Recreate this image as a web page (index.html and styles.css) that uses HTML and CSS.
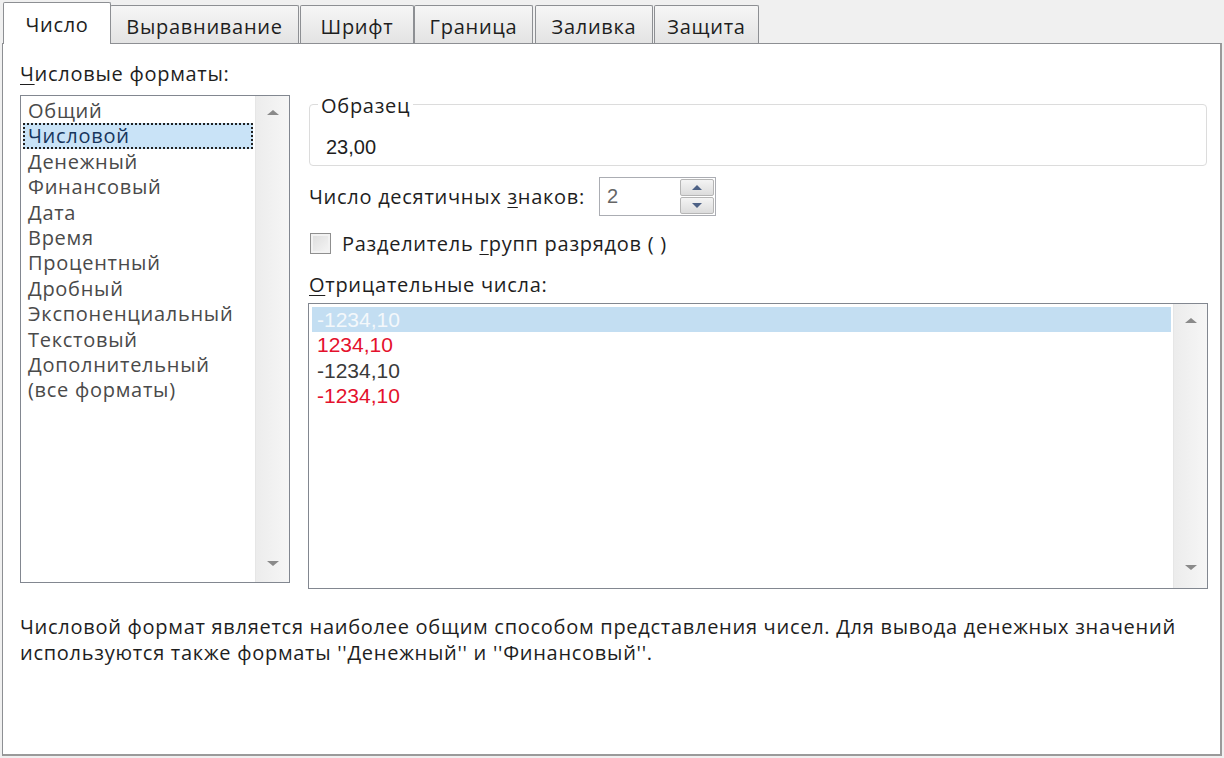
FILE: index.html
```html
<!DOCTYPE html>
<html lang="ru">
<head>
<meta charset="utf-8">
<link rel="stylesheet" href="styles.css">
</head>
<body>
<div class="dialog">
  <div class="tabs">
    <div class="tab active">Число</div>
    <div class="tab t2">Выравнивание</div>
    <div class="tab t3">Шрифт</div>
    <div class="tab t4">Граница</div>
    <div class="tab t5">Заливка</div>
    <div class="tab t6">Защита</div>
  </div>
  <div class="panel">
    <div class="main">
      <div class="leftcol">
        <div class="label"><u>Ч</u>исловые форматы:</div>
        <div class="listbox formats">
          <div class="items">
            <div class="item">Общий</div>
            <div class="item sel">Числовой</div>
            <div class="item">Денежный</div>
            <div class="item">Финансовый</div>
            <div class="item">Дата</div>
            <div class="item">Время</div>
            <div class="item">Процентный</div>
            <div class="item">Дробный</div>
            <div class="item">Экспоненциальный</div>
            <div class="item">Текстовый</div>
            <div class="item">Дополнительный</div>
            <div class="item">(все форматы)</div>
          </div>
          <div class="vscroll">
            <span class="arr up"></span>
            <span class="arr down"></span>
          </div>
        </div>
      </div>
      <div class="rightcol">
        <div class="group">
          <div class="legend">Образец</div>
          <div class="sample">23,00</div>
        </div>
        <div class="row decimals">
          <span class="rlabel declabel">Число десятичных <u>з</u>наков:</span>
          <div class="spin">
            <span class="spinval">2</span>
            <div class="spinbtns">
              <div class="sb"><span class="sarr up"></span></div>
              <div class="sb"><span class="sarr down"></span></div>
            </div>
          </div>
        </div>
        <div class="row check">
          <span class="cbox"></span>
          <span class="rlabel">Разделитель <u>г</u>рупп разрядов ( )</span>
        </div>
        <div class="label neg"><u>О</u>трицательные числа:</div>
        <div class="listbox negs">
          <div class="items">
            <div class="num selnum">-1234,10</div>
            <div class="num red">1234,10</div>
            <div class="num">-1234,10</div>
            <div class="num red">-1234,10</div>
          </div>
          <div class="vscroll">
            <span class="arr up"></span>
            <span class="arr down"></span>
          </div>
        </div>
      </div>
    </div>
    <p class="desc">Числовой формат является наиболее общим способом представления чисел. Для вывода денежных значений используются также форматы ''Денежный'' и ''Финансовый''.</p>
  </div>
</div>
</body>
</html>
```

FILE: styles.css
```css
* { box-sizing: border-box; }
html, body { margin: 0; padding: 0; }
body {
  background: #f0f0f0;
  font-family: "Open Sans", "DejaVu Sans", sans-serif;
  font-size: 20px;
  letter-spacing: 0.72px;
  color: #1e1e1e;
  width: 1224px;
  height: 758px;
  overflow: hidden;
}
u { text-decoration: underline; text-underline-offset: 3px; text-decoration-thickness: 1px; }

.dialog { width: 1224px; height: 758px; display: flex; flex-direction: column; }

.tabs {
  height: 44px;
  display: flex;
  align-items: flex-end;
  padding-left: 3px;
  position: relative;
  z-index: 2;
}
.tab {
  height: 38px;
  border: 1px solid #8d8f93;
  border-bottom: none;
  background: linear-gradient(#f6f6f6, #e3e3e3);
  display: flex;
  align-items: center;
  justify-content: center;
  color: #1e1e1e;
  margin-bottom: 1px;
  padding-top: 4px;
  border-top-left-radius: 2px;
  border-top-right-radius: 2px;
}
.tab.active {
  width: 108px;
  height: 42px;
  background: #fff;
  margin-bottom: 0;
  padding-top: 2px;
  padding-bottom: 0;
  border-color: #8d8f93;
}
.t2 { width: 189px; margin-left: -1px; }
.t3 { width: 114px; margin-left: 1px; }
.t4 { width: 119px; margin-left: 0; }
.t5 { width: 118px; margin-left: 2px; }
.t6 { width: 105px; margin-left: 1px; }

.panel {
  margin-left: 2px;
  width: 1220px;
  height: 713px;
  margin-top: -1px;
  background: #fff;
  border: 1px solid #8d8f93;
  border-right-width: 2px;
  border-bottom-width: 2px;
  border-right-color: #9a9a9a;
  border-bottom-color: #9a9a9a;
  padding: 18px 0 0 17px;
}

.main { display: flex; gap: 18px; }
.leftcol { width: 270px; display: flex; flex-direction: column; }
.label { height: 24px; line-height: 24px; white-space: nowrap; }
.leftcol .label { margin-bottom: 9px; }

.listbox {
  border: 1px solid #828790;
  background: #fff;
  display: flex;
}
.formats { height: 488px; }
.items { flex: 1; padding: 2px 2px 0 2px; }
.formats .item {
  height: 25.4px;
  line-height: 25.4px;
  padding-left: 5px;
  color: #4a4a4a;
  white-space: nowrap;
}
.formats .item.sel {
  background: #c9e3f7;
  outline: 2px dotted #202020;
  outline-offset: -2px;
  color: #17365d;
}
.vscroll {
  width: 34px;
  background: linear-gradient(90deg, #ececec, #f6f6f6);
  border-left: 1px solid #e6e6e6;
  display: flex;
  flex-direction: column;
  justify-content: space-between;
  align-items: center;
  padding: 14px 0 16px;
}
.arr { width: 0; height: 0; border-left: 6px solid transparent; border-right: 6px solid transparent; }
.arr.up { border-bottom: 5px solid #8a8a8a; }
.arr.down { border-top: 5px solid #8a8a8a; }

.rightcol { width: 900px; display: flex; flex-direction: column; }
.group {
  margin-top: 42px;
  margin-left: 1px;
  width: 898px;
  height: 62px;
  border: 1px solid #dcdcdc;
  border-radius: 4px;
  position: relative;
  padding: 28px 0 0 16px;
}
.legend {
  position: absolute;
  left: 8px;
  top: -13px;
  background: #fff;
  padding: 0 3px;
  line-height: 28px;
}
.sample { font-family: "Liberation Sans", Arial, sans-serif; font-size: 20px; line-height: 28px; letter-spacing: 0; }

.row { display: flex; align-items: center; }
.rlabel { white-space: nowrap; }
.declabel { width: 290px; }
.decimals { margin-top: 11px; height: 39px; padding-left: 1px; }
.spin {
  width: 117px;
  height: 39px;
  border: 1px solid #abadb3;
  display: flex;
  align-items: center;
  justify-content: space-between;
  padding: 0 1px 0 7px;
}
.spinval { font-family: "Liberation Sans", Arial, sans-serif; font-size: 20px; color: #666; letter-spacing: 0; }
.spinbtns { width: 34px; height: 35px; display: flex; flex-direction: column; gap: 1px; }
.sb {
  flex: 1;
  border: 1px solid #b5b5b5;
  border-radius: 2px;
  background: linear-gradient(#f4f4f4, #dcdcdc);
  display: flex;
  align-items: center;
  justify-content: center;
}
.sarr { width: 0; height: 0; border-left: 5px solid transparent; border-right: 5px solid transparent; }
.sarr.up { border-bottom: 5px solid #4d6185; }
.sarr.down { border-top: 5px solid #4d6185; }

.check { margin-top: 15px; height: 24px; gap: 11px; padding-left: 2px; }
.cbox {
  width: 21px;
  height: 21px;
  border: 1px solid #8f8f8f;
  background: linear-gradient(135deg, #dcdcdc, #f6f6f6);
  box-shadow: inset 0 0 0 2px #f2f2f2;
}

.label.neg { margin-top: 19px; padding-left: 1px; height: 22px; line-height: 22px; }
.negs { margin-top: 7px; height: 286px; }
.negs .items { padding: 3px 2px 0 3px; }
.num {
  font-family: "Liberation Sans", Arial, sans-serif;
  font-size: 21px;
  letter-spacing: 0;
  height: 25.4px;
  line-height: 25.4px;
  padding-left: 5px;
  color: #3a3a3a;
}
.num.red { color: #e4112d; }
.num.selnum { background: #c3def2; color: #f4f8fb; }
.negs .vscroll { padding: 14px 0 18px; }

.desc {
  margin: 25px 0 0 0;
  width: 1190px;
  line-height: 26px;
  color: #1e1e1e;
}
```
